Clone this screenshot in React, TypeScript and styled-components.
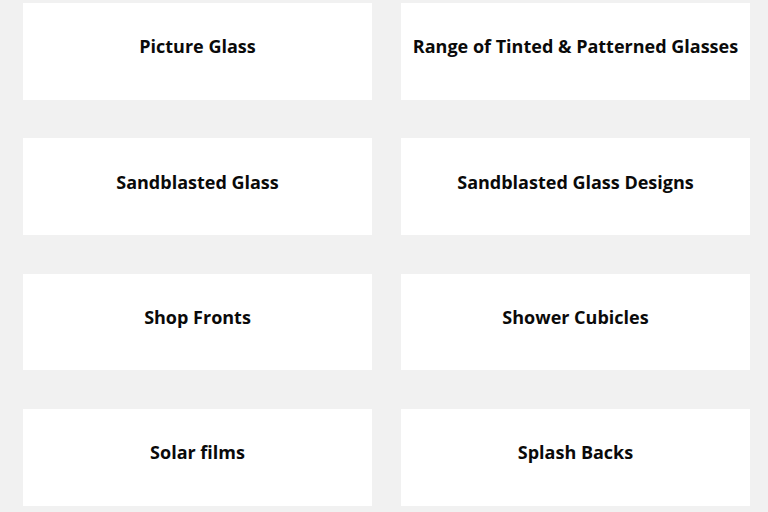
import styled, { createGlobalStyle } from "styled-components"

const GlobalStyle = createGlobalStyle`
    html, body {
        margin: 0;
        padding: 0;
        background: #f1f1f1;
    }
    body {
        font-family: "Open Sans", "Liberation Sans", sans-serif;
    }
`

const Grid = styled.div`
    display: grid;
    grid-template-columns: 349px 349px;
    column-gap: 29px;
    row-gap: 38.7px;
    padding: 3px 18px 0 23px;
`

const Card = styled.div`
    height: 96.7px;
    background: #ffffff;
    display: flex;
    align-items: center;
    justify-content: center;
    padding-bottom: 10px;
    box-sizing: border-box;
`

const Title = styled.h3`
    margin: 0;
    font-size: 18px;
    font-weight: 700;
    color: #0a0a0a;
    text-align: center;
    letter-spacing: 0;
`

const items = [
    "Picture Glass",
    "Range of Tinted & Patterned Glasses",
    "Sandblasted Glass",
    "Sandblasted Glass Designs",
    "Shop Fronts",
    "Shower Cubicles",
    "Solar films",
    "Splash Backs",
]

export default function App() {
    return <>
        <GlobalStyle />
        <Grid>
            {items.map(name => (
                <Card key={name}>
                    <Title>{name}</Title>
                </Card>
            ))}
        </Grid>
    </>
}
